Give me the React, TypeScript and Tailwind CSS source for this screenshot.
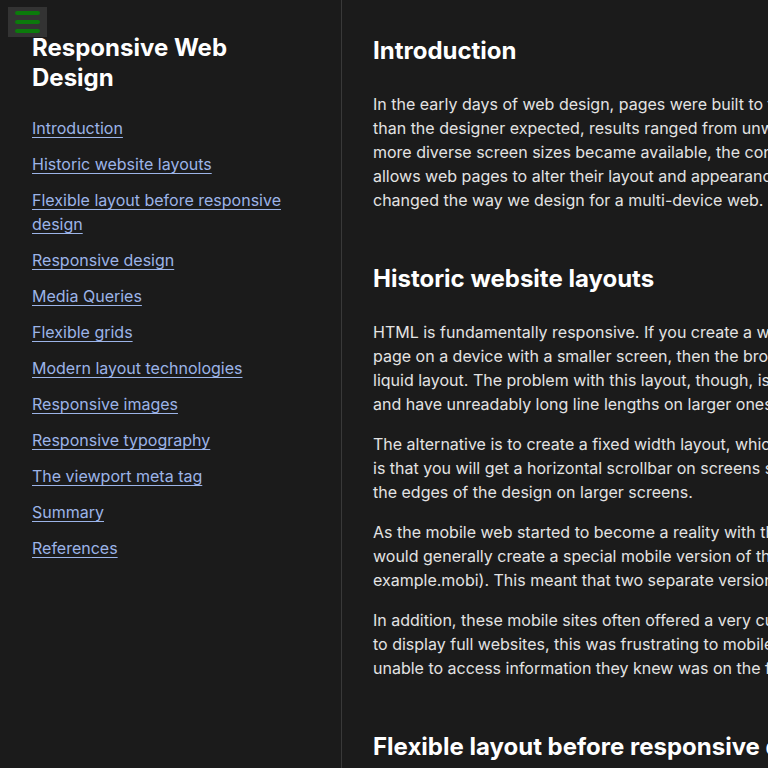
import React from 'react';

const links = [
  'Introduction',
  'Historic website layouts',
  'Flexible layout before responsive design',
  'Responsive design',
  'Media Queries',
  'Flexible grids',
  'Modern layout technologies',
  'Responsive images',
  'Responsive typography',
  'The viewport meta tag',
  'Summary',
  'References',
];

const sections: { title: string; paras: string[][] }[] = [
  {
    title: 'Introduction',
    paras: [
      [
        'In the early days of web design, pages were built to target a particular screen size. If the user had a larger or smaller screen',
        'than the designer expected, results ranged from unwanted scrollbars to overly long line lengths, and poor use of space. As',
        'more diverse screen sizes became available, the concept of responsive web design (RWD) appeared, a set of practices that',
        'allows web pages to alter their layout and appearance to suit different screen widths, resolutions, etc. It is an idea that',
        'changed the way we design for a multi-device web.',
      ],
    ],
  },
  {
    title: 'Historic website layouts',
    paras: [
      [
        'HTML is fundamentally responsive. If you create a web page containing only HTML, with no CSS, and then view the',
        'page on a device with a smaller screen, then the browser will automatically reflow the text to fit. This is known as a',
        'liquid layout. The problem with this layout, though, is that content can look squashed on very small screens',
        'and have unreadably long line lengths on larger ones.',
      ],
      [
        'The alternative is to create a fixed width layout, which has a set size in pixels. The problem with this approach',
        'is that you will get a horizontal scrollbar on screens smaller than the site width, and lots of white space at',
        'the edges of the design on larger screens.',
      ],
      [
        'As the mobile web started to become a reality with the first feature phones, companies who wished to embrace mobile',
        'would generally create a special mobile version of their site, with a different URL (often something like m.example.com, or',
        'example.mobi). This meant that two separate versions of the site had to be developed and kept up-to-date.',
      ],
      [
        'In addition, these mobile sites often offered a very cut-down experience. As mobile devices became more powerful and able',
        'to display full websites, this was frustrating to mobile users who found themselves trapped in the site\'s mobile version and',
        'unable to access information they knew was on the full-featured desktop version of the site.',
      ],
    ],
  },
  {
    title: 'Flexible layout before responsive design',
    paras: [
      [
        'A number of approaches were developed to try to solve the downsides of the liquid or fixed-width methods of building websites.',
      ],
    ],
  },
];

export default function App() {
  return (
    <div
      className="relative flex h-[768px] w-[768px] overflow-hidden bg-[#1b1b1b] text-[#e3e3e3]"
      style={{ fontFamily: 'Inter, "Noto Sans", sans-serif' }}
    >
      <button className="absolute left-[8px] top-[7px] flex h-[30px] w-[39px] flex-col items-center justify-center gap-[5px] bg-[#333333]">
        <span className="block h-[4px] w-[25px] rounded-full bg-[#0b7a0b]" />
        <span className="block h-[4px] w-[25px] rounded-full bg-[#0b7a0b]" />
        <span className="block h-[4px] w-[25px] rounded-full bg-[#0b7a0b]" />
      </button>

      <aside className="w-[342px] shrink-0 border-r border-[#393939] px-8 pt-[33px]">
        <h1 className="mb-[23px] text-[24px] font-bold leading-[30px] text-white">
          Responsive Web
          <br />
          Design
        </h1>
        <ul className="flex flex-col gap-3">
          {links.map(l => (
            <li key={l} className="text-[16px] leading-6">
              <a href="#" className="text-[#9cb4e8] underline underline-offset-[3px]">
                {l}
              </a>
            </li>
          ))}
        </ul>
      </aside>

      <main className="shrink-0 pl-[31px] pt-[35px]">
        {sections.map(s => (
          <section key={s.title} className="mb-[51px]">
            <h2 className="mb-[25px] text-[24px] font-bold leading-8 text-white">{s.title}</h2>
            <div className="flex flex-col gap-4">
              {s.paras.map((p, i) => (
                <p key={i} className="whitespace-nowrap text-[16px] leading-6">
                  {p.map((line, j) => (
                    <React.Fragment key={j}>
                      {line}
                      {j < p.length - 1 && <br />}
                    </React.Fragment>
                  ))}
                </p>
              ))}
            </div>
          </section>
        ))}
      </main>
    </div>
  );
}
